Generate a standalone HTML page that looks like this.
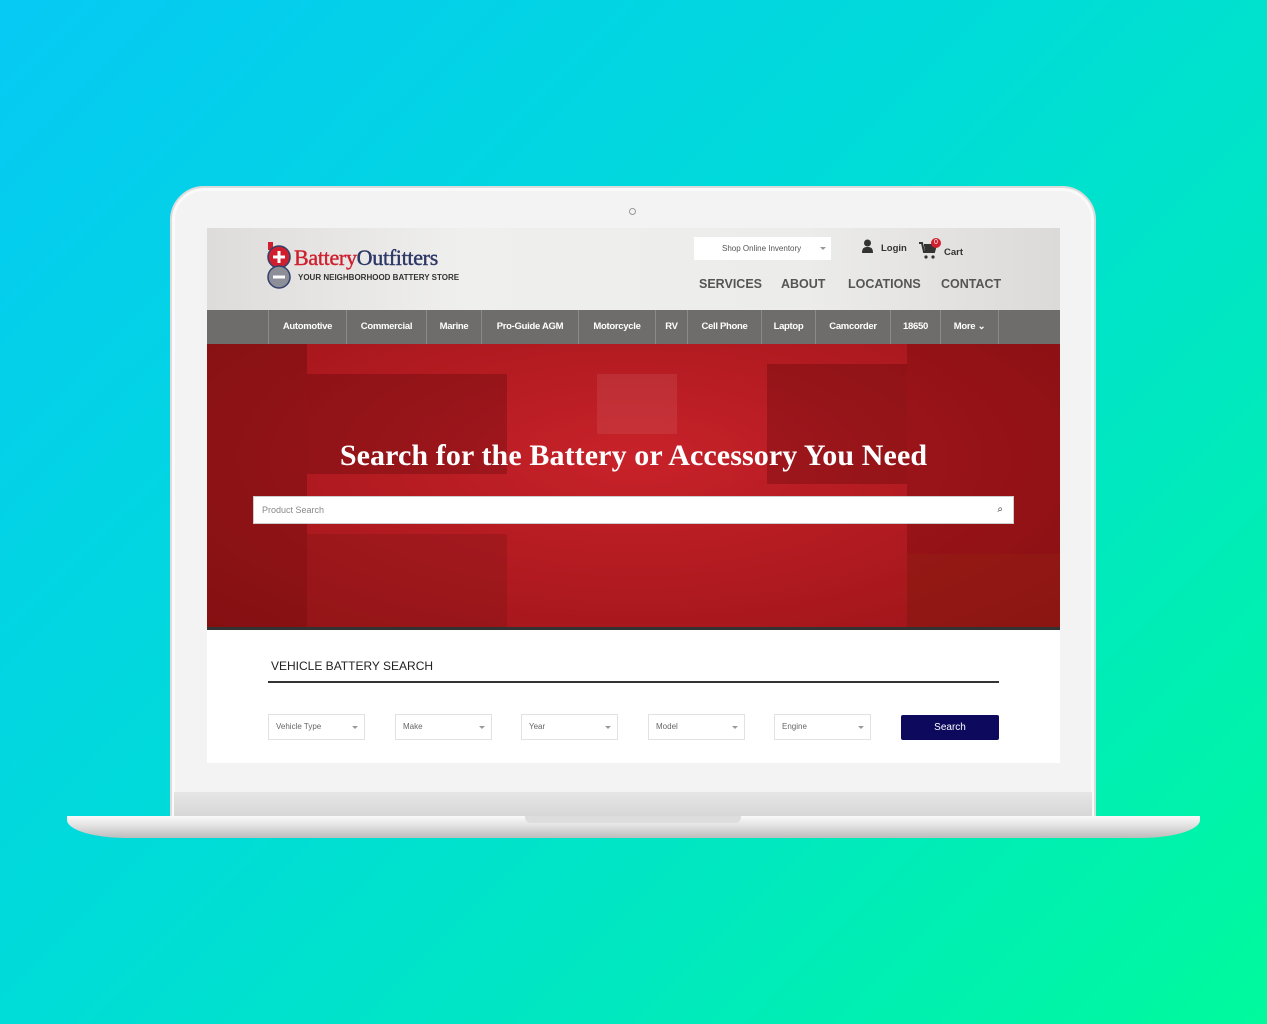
<!DOCTYPE html>
<html><head><meta charset="utf-8"><style>
*{margin:0;padding:0;box-sizing:border-box}
body{width:1267px;height:1024px;overflow:hidden;position:relative;font-family:"Liberation Sans",sans-serif;
background:linear-gradient(135deg,#06c9f4 0%,#00dcd8 45%,#00e8c0 70%,#00fa9c 100%);}
.abs{position:absolute}
.lid{left:170px;top:186px;width:926px;height:640px;border-radius:34px 34px 0 0;background:#f3f3f3;border:2px solid #dcdcdc;box-shadow:inset 0 0 0 3px #fafafa}
.chin{left:174px;top:792px;width:918px;height:26px;background:linear-gradient(#e6e6e6,#d6d6d6)}
.base{left:67px;top:816px;width:1133px;height:22px;border-radius:0 0 60px 60px/0 0 18px 18px;background:linear-gradient(#fafafa 0%,#e4e4e4 40%,#bdbdbd 100%)}
.notch{left:525px;top:816px;width:216px;height:7px;background:#ddd;border-radius:0 0 6px 6px}
.cam{left:629px;top:208px;width:7px;height:7px;border-radius:50%;border:1px solid #999}
.screen{left:207px;top:228px;width:853px;height:535px;background:#fff;overflow:hidden}
.hdr{left:0;top:0;width:853px;height:82px;background:linear-gradient(90deg,#dedcda,#efefed 30%,#ececea 70%,#dcdad8)}
.nav{left:0;top:82px;width:853px;height:34px;background:#6e6d6c}
.nav span{position:absolute;top:0;height:34px;line-height:34px;color:#fff;font-size:9.5px;font-weight:bold;text-align:center;border-left:1px solid #8a8a8a;letter-spacing:-.3px}
.hero{left:0;top:116px;width:853px;height:286px;background:
radial-gradient(ellipse at 50% 40%,#c8222a 0%,#b51c22 40%,#9c1418 100%);}
.shelf{position:absolute;background:rgba(60,0,0,.25)}
.menu{top:49px;font-size:12.5px;font-weight:bold;color:#555}
.sel{top:486px;width:97px;height:26px;border:1px solid #e2e2e2;font-size:8px;color:#666;line-height:24px;padding-left:7px}
.sel:after{content:"";position:absolute;right:6px;top:11px;border:3px solid transparent;border-top-color:#999}
</style></head><body>
<div class="abs lid"></div>
<div class="abs chin"></div>
<div class="abs base"></div>
<div class="abs notch"></div>
<div class="abs cam"></div>
<div class="abs screen">
 <div class="abs hdr"></div>
 <svg class="abs" style="left:59px;top:14px" width="28" height="48" viewBox="0 0 28 48">
  <rect x="2" y="0" width="5" height="8" fill="#d01e2e"/>
  <circle cx="13" cy="15" r="11" fill="#d01e2e" stroke="#33406a" stroke-width="1.5"/>
  <path d="M13 9v12M7 15h12" stroke="#fff" stroke-width="3"/>
  <circle cx="13" cy="35" r="11" fill="#8c8f98" stroke="#33406a" stroke-width="1.5"/>
  <path d="M7 35h12" stroke="#fff" stroke-width="3"/>
 </svg>
 <div class="abs" style="left:87px;top:17px;font-family:'Liberation Serif',serif;font-size:22px;letter-spacing:-.3px;-webkit-text-stroke:.4px"><span style="color:#cf1f2e;-webkit-text-stroke-color:#cf1f2e">Battery</span><span style="color:#2d3766;-webkit-text-stroke-color:#2d3766">Outfitters</span></div>
 <div class="abs" style="left:91px;top:45px;font-size:8px;font-weight:bold;color:#333">YOUR NEIGHBORHOOD BATTERY STORE</div>
 <div class="abs" style="left:487px;top:9px;width:137px;height:23px;background:#fff;font-size:8px;color:#555;line-height:23px;padding-left:28px">Shop Online Inventory<span style="position:absolute;right:5px;top:10px;border:3px solid transparent;border-top-color:#999"></span></div>
 <svg class="abs" style="left:654px;top:11px" width="13" height="14" viewBox="0 0 13 14"><circle cx="6.5" cy="4" r="3.5" fill="#333"/><path d="M1 14c0-5 2-6 5.5-6s5.5 1 5.5 6z" fill="#333"/></svg>
 <div class="abs" style="left:674px;top:15px;font-size:9.5px;font-weight:bold;color:#333">Login</div>
 <svg class="abs" style="left:711px;top:12px" width="20" height="20" viewBox="0 0 20 20"><path d="M1 3h3l2 9h10l2-7H6" fill="none" stroke="#333" stroke-width="2"/><path d="M6 5h12l-2 7H7z" fill="#333"/><circle cx="8" cy="17" r="1.6" fill="#333"/><circle cx="15" cy="17" r="1.6" fill="#333"/></svg>
 <div class="abs" style="left:724px;top:10px;width:10px;height:10px;border-radius:50%;background:#d01e2e;color:#fff;font-size:7px;text-align:center;line-height:10px">0</div>
 <div class="abs" style="left:737px;top:19px;font-size:9.5px;font-weight:bold;color:#333">Cart</div>
 <div class="abs menu" style="left:492px">SERVICES</div>
 <div class="abs menu" style="left:574px">ABOUT</div>
 <div class="abs menu" style="left:641px">LOCATIONS</div>
 <div class="abs menu" style="left:734px">CONTACT</div>
 <div class="abs nav">
  <span style="left:61px;width:78px">Automotive</span>
  <span style="left:139px;width:80px">Commercial</span>
  <span style="left:219px;width:55px">Marine</span>
  <span style="left:274px;width:97px">Pro-Guide AGM</span>
  <span style="left:371px;width:77px">Motorcycle</span>
  <span style="left:448px;width:32px">RV</span>
  <span style="left:480px;width:74px">Cell Phone</span>
  <span style="left:554px;width:54px">Laptop</span>
  <span style="left:608px;width:75px">Camcorder</span>
  <span style="left:683px;width:50px">18650</span>
  <span style="left:733px;width:59px;border-right:1px solid #8a8a8a">More ⌄</span>
 </div>
 <div class="abs hero">
  <div class="shelf" style="left:0;top:0;width:100px;height:286px;background:rgba(90,10,10,.35)"></div>
  <div class="shelf" style="left:100px;top:30px;width:200px;height:100px"></div>
  <div class="shelf" style="left:390px;top:30px;width:80px;height:60px;background:rgba(255,255,255,.08)"></div>
  <div class="shelf" style="left:560px;top:20px;width:140px;height:120px"></div>
  <div class="shelf" style="left:700px;top:0;width:153px;height:286px;background:rgba(80,0,0,.25)"></div>
  <div class="shelf" style="left:100px;top:190px;width:200px;height:96px;background:rgba(120,20,20,.3)"></div>
  <div class="shelf" style="left:700px;top:210px;width:153px;height:76px;background:rgba(150,40,20,.3)"></div>
  <div class="shelf" style="left:0;top:283px;width:853px;height:3px;background:#333"></div>
 </div>
 <div class="abs" style="left:0;top:211px;width:853px;text-align:center;font-family:'Liberation Serif',serif;font-weight:bold;font-size:30px;color:#fff;letter-spacing:.1px">Search for the Battery or Accessory You Need</div>
 <div class="abs" style="left:46px;top:268px;width:761px;height:28px;background:#fff;border:1px solid #ccc;font-size:9px;color:#888;line-height:26px;padding-left:8px">Product Search<span style="position:absolute;right:10px;top:0;color:#222;font-size:10px">&#x2315;</span></div>
 <div class="abs" style="left:64px;top:431px;font-size:12px;color:#222">VEHICLE BATTERY SEARCH</div>
 <div class="abs" style="left:61px;top:453px;width:731px;height:2px;background:#333"></div>
 <div class="abs sel" style="left:61px">Vehicle Type</div>
 <div class="abs sel" style="left:188px">Make</div>
 <div class="abs sel" style="left:314px">Year</div>
 <div class="abs sel" style="left:441px">Model</div>
 <div class="abs sel" style="left:567px">Engine</div>
 <div class="abs" style="left:694px;top:487px;width:98px;height:25px;background:#0d0a5e;color:#fff;font-size:10px;text-align:center;line-height:25px;border-radius:2px">Search</div>
</div>
</body></html>
